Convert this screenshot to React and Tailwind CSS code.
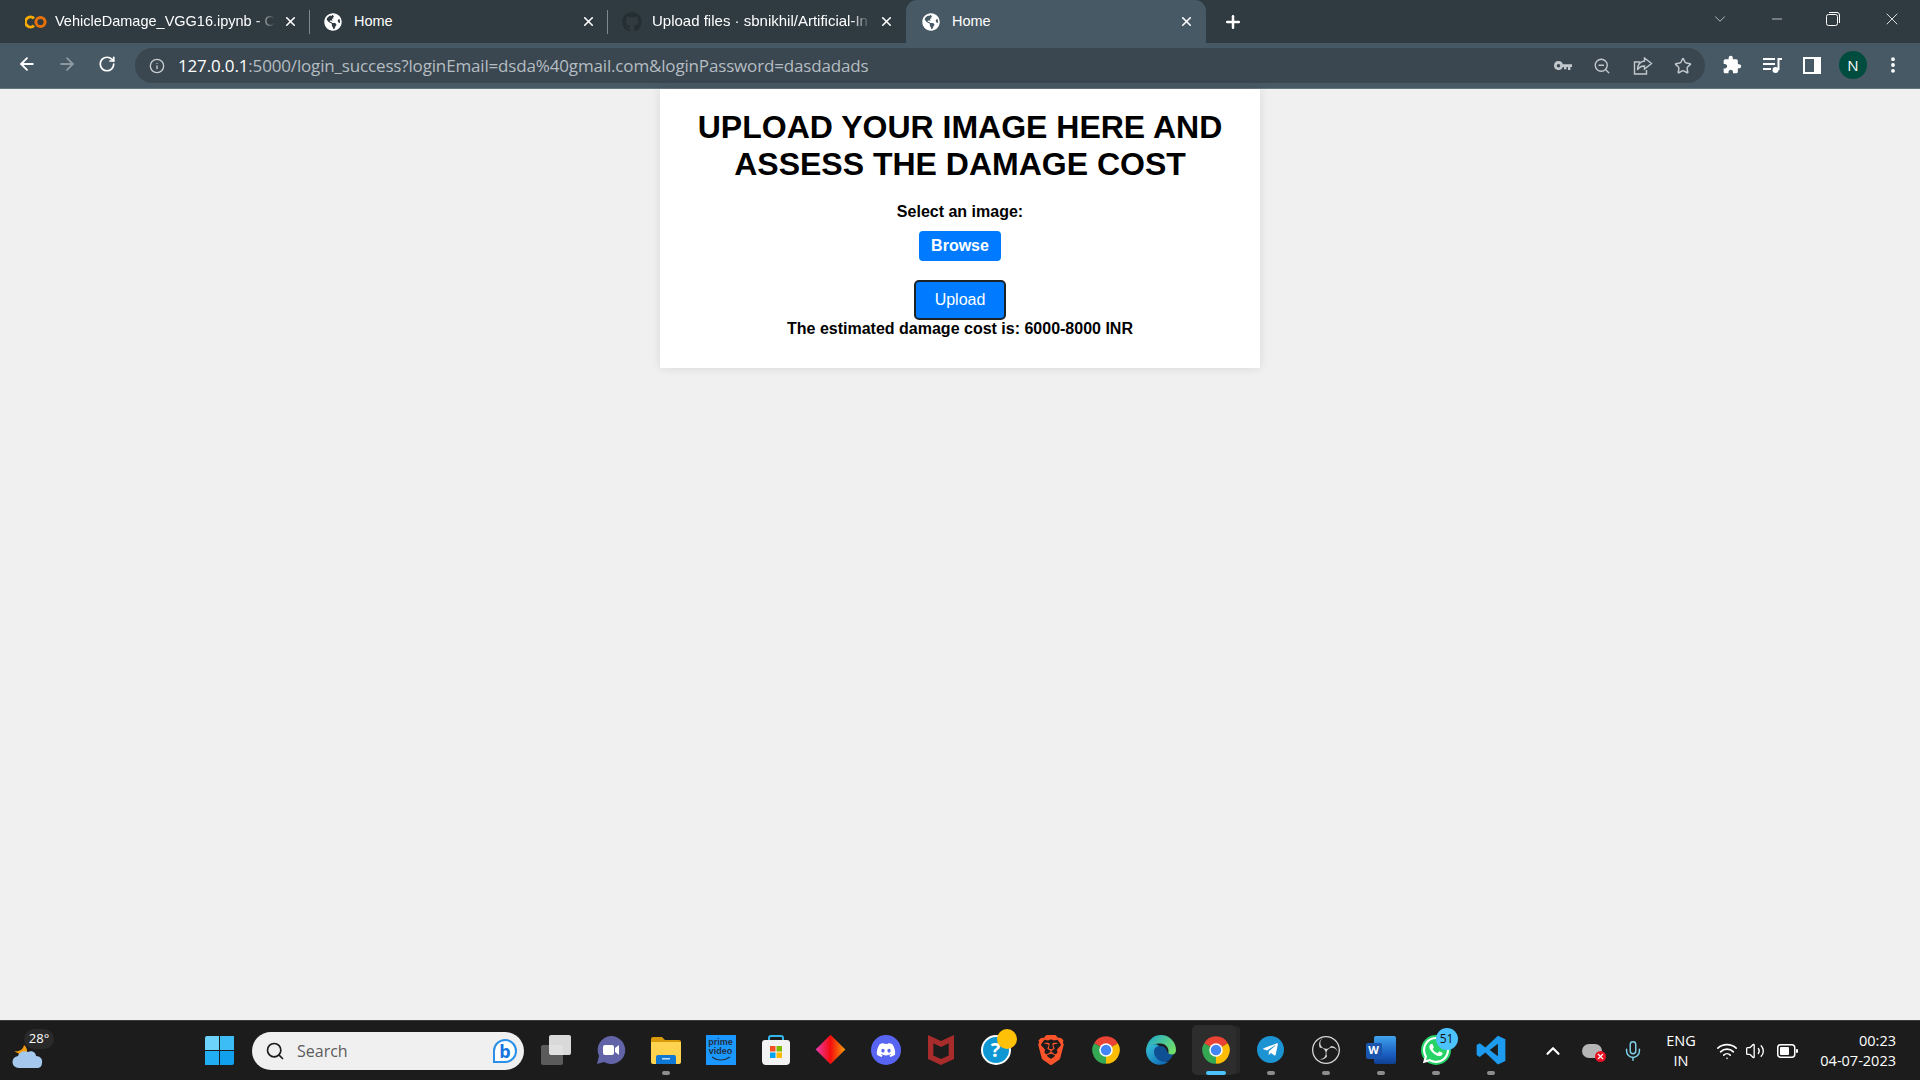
import React from "react";
import { FaGithub, FaGlobeAmericas, FaDiscord, FaWhatsapp, FaTelegramPlane } from "react-icons/fa";
import { SiObsstudio, SiBrave, SiMcafee } from "react-icons/si";
import { ArrowLeft, ArrowRight, RotateCw, Info, ZoomOut, Star, X, Plus, ChevronDown, ChevronUp, Minus, Mic, Wifi, Search, EllipsisVertical, Volume2 } from "lucide-react";

const UI = { fontFamily: '"Open Sans","Noto Sans",sans-serif' };
const TabFont = { fontFamily: '"Liberation Sans",sans-serif' };

function Colab() {
  return (
    <svg width="22" height="14" viewBox="0 0 22 14" fill="none">
      <path d="M9 3.4A5 5 0 1 0 9 10.6" stroke="#f9ab00" strokeWidth="3" />
      <circle cx="15.5" cy="7" r="4.6" stroke="#e8710a" strokeWidth="3" />
    </svg>
  );
}

function Tab({ icon, title, active, fade, sep, first, wide }) {
  if (active) {
    return (
      <div className="flex h-[43px] w-[300px] shrink-0 items-center rounded-t-[11px] bg-[#475964] pl-[16px] pr-[12px]">
        <div className="flex w-[30px] shrink-0">{icon}</div>
        <span className="flex-1 text-[14.5px] text-white" style={TabFont}>{title}</span>
        <X size={15} strokeWidth={2.6} className="text-white" />
      </div>
    );
  }
  return (
    <div className={`relative flex h-[43px] w-[298px] shrink-0 items-center pr-[12px] ${first ? "pl-[13px]" : "pl-[14px]"}`}>
      <div className="flex w-[30px] shrink-0">{icon}</div>
      <span
        className={`flex-1 overflow-hidden whitespace-nowrap text-white ${wide ? "text-[15px]" : "text-[14.5px]"} ${fade ? "[mask-image:linear-gradient(to_right,#000_91%,transparent)]" : ""}`}
        style={TabFont}
      >
        {title}
      </span>
      <X size={15} strokeWidth={2.6} className="ml-[8px] shrink-0 text-white" />
      {sep && <div className="absolute right-0 top-[10px] h-[24px] w-px bg-[#7d8a92]" />}
    </div>
  );
}

function TabStrip() {
  return (
    <div className="flex h-[43px] items-start bg-[#2f3a41] pl-[12px]" style={UI}>
      <Tab first icon={<Colab />} title="VehicleDamage_VGG16.ipynb - C" fade sep />
      <Tab icon={<FaGlobeAmericas size={18} className="text-white" />} title="Home" sep />
      <Tab wide icon={<FaGithub size={20} className="text-[#252e33]" />} title="Upload files · sbnikhil/Artificial-In" fade />
      <Tab active icon={<FaGlobeAmericas size={18} className="text-white" />} title="Home" />
      <Plus size={20} strokeWidth={3} className="ml-[17px] mt-[12px] text-white" />
      <div className="ml-auto flex h-[37px] items-center">
        <ChevronDown size={18} strokeWidth={1} className="mr-[40px] text-[#e3e6e8]" />
        <Minus size={16} strokeWidth={1} className="mr-[41px] text-white" />
        <svg width="14" height="14" viewBox="0 0 14 14" fill="none" className="mr-[42px]" stroke="#fff" strokeWidth="1">
          <rect x="0.5" y="2.5" width="11" height="11" rx="2" />
          <path d="M3 0.5h8a2.5 2.5 0 0 1 2.500 2.500v8" />
        </svg>
        <X size={20} strokeWidth={1} className="mr-[18px] text-white" />
      </div>
    </div>
  );
}

function Toolbar() {
  return (
    <div className="flex h-[46px] items-start border-b border-[#66767f] bg-[#475964] pt-[5px]" style={UI}>
      <div className="flex w-[135px] shrink-0 items-center pl-[17px] pt-[6px]">
        <ArrowLeft size={20} strokeWidth={2.2} className="text-white" />
        <ArrowRight size={20} strokeWidth={2.2} className="ml-[20px] text-[#8d99a1]" />
        <RotateCw size={18} strokeWidth={2.3} className="ml-[21px] text-white" />
      </div>
      <div className="flex h-[35px] w-[1570px] shrink-0 items-center rounded-full bg-[#3a4750] pl-[14px]">
        <Info size={16} strokeWidth={2} className="text-[#c8ced2]" />
        <div className="ml-[13px] whitespace-nowrap text-[17px] leading-none tracking-[-0.16px]">
          <span className="text-white">127.0.0.1</span>
          <span className="text-[#b5bdc2]">:5000/login_success?loginEmail=dsda%40gmail.com&amp;loginPassword=dasdadads</span>
        </div>
        <div className="ml-auto flex items-center text-[#c2c8cc]">
          <svg width="18" height="10" viewBox="0 0 18 10" className="mr-[21px]" fill="currentColor">
            <path d="M4.500 0a4.500 4.500 0 0 1 4.300 3.200H18V6h-1.600v3h-2.400V6h-1.500v2.200H10V6H8.800A4.500 4.500 0 1 1 4.500 0zm0 3a1.800 1.800 0 1 0 0 3.600 1.800 1.800 0 0 0 0-3.600z" />
          </svg>
          <ZoomOut size={18} strokeWidth={1.8} className="mr-[22px]" />
          <svg width="20" height="18" viewBox="0 0 20 18" fill="none" stroke="currentColor" strokeWidth="1.400" className="mr-[21px]">
            <path d="M7 5H1.500v12h12v-4" />
            <path d="M11.500 1l7 5.500-7 5.500V9C8 9 5.800 10.300 4.500 13c0-5 2.500-8.500 7-9z" />
          </svg>
          <Star size={18} strokeWidth={2} className="mr-[13px]" />
        </div>
      </div>
      <div className="flex flex-1 items-center pl-[17px] pt-[3px] text-white">
        <svg width="20" height="20" viewBox="0 0 24 24" fill="#fff">
          <path d="M20.500 11H19V7c0-1.100-.9-2-2-2h-4V3.500C13 2.120 11.880 1 10.500 1S8 2.120 8 3.500V5H4c-1.100 0-1.990.9-1.990 2v3.800H3.500c1.490 0 2.700 1.210 2.700 2.700s-1.210 2.700-2.700 2.700H2V20c0 1.100.9 2 2 2h3.800v-1.500c0-1.490 1.210-2.700 2.700-2.700 1.490 0 2.700 1.210 2.700 2.700V22H17c1.100 0 2-.9 2-2v-4h1.500c1.380 0 2.500-1.120 2.500-2.500S21.880 11 20.500 11z" />
        </svg>
        <svg width="20" height="18" viewBox="0 0 20 18" className="ml-[21px]" fill="#fff">
          <rect x="0" y="2" width="12" height="2" /><rect x="0" y="7" width="12" height="2" /><rect x="0" y="12" width="8" height="2" />
          <circle cx="12.500" cy="14" r="3" /><path d="M14.500 14V2H19v2h-2.500v10z" />
        </svg>
        <div className="ml-[20px] flex h-[17px] w-[18px] border-2 border-white bg-white">
          <div className="h-full w-[9px] bg-[#475964]" />
        </div>
        <div className="ml-[18px] flex h-[28px] w-[28px] items-center justify-center rounded-full bg-[#004d40] text-[15px] text-white">N</div>
        <EllipsisVertical size={20} strokeWidth={2.6} className="ml-[16px]" />
      </div>
    </div>
  );
}

function Card() {
  return (
    <div className="mx-auto flex h-[279px] w-[600px] flex-col items-center bg-white pt-[20px] shadow-[0_0_10px_rgba(0,0,0,0.1)]" style={{ fontFamily: '"Liberation Sans",Arial,sans-serif' }}>
      <h1 className="w-[560px] text-center text-[32px] font-bold leading-[37px] text-black">UPLOAD YOUR IMAGE HERE AND ASSESS THE DAMAGE COST</h1>
      <div className="mt-[20px] text-[16px] font-bold leading-[18px] text-black">Select an image:</div>
      <div className="mt-[10px] flex h-[30px] w-[82px] items-center justify-center rounded-[4px] bg-[#007bff] text-[16px] font-bold text-white">Browse</div>
      <div className="mt-[19px] flex h-[40px] w-[92px] items-center justify-center rounded-[5px] border-2 border-[#1d2226] bg-[#007bff] text-[16px] text-white">Upload</div>
      <div className="text-[16px] font-bold leading-[18px] text-black">The estimated damage cost is: 6000-8000 INR</div>
    </div>
  );
}

function Chrome() {
  return (
    <svg width="30" height="30" viewBox="0 0 24 24">
      <path d="M12 12L2.470 6.500A11 11 0 0 1 21.530 6.500z" fill="#ea4335" />
      <path d="M12 12L21.530 6.500A11 11 0 0 1 12 23z" fill="#fbbc04" />
      <path d="M12 12L12 23A11 11 0 0 1 2.470 6.500z" fill="#34a853" />
      <circle cx="12" cy="12" r="5.400" fill="#fff" />
      <circle cx="12" cy="12" r="4.200" fill="#4285f4" />
    </svg>
  );
}

function Edge() {
  return (
    <svg width="30" height="30" viewBox="0 0 30 30">
      <defs>
        <linearGradient id="edgeA" x1="0" y1="0" x2="1" y2="1"><stop offset="0" stopColor="#36c3d8" /><stop offset="1" stopColor="#0b62b5" /></linearGradient>
        <linearGradient id="edgeB" x1="0" y1="0" x2="1" y2="0.600"><stop offset="0" stopColor="#1ba7d8" /><stop offset="1" stopColor="#6fdc6b" /></linearGradient>
      </defs>
      <path d="M15 0A15 15 0 0 1 30 15C30 20 25 21 22 19 24 15 21 8.500 14 8.500 8 8.500 3 11 0 15 1 6 7 0 15 0z" fill="url(#edgeB)" />
      <path d="M0 15C2 9 14 6 14 14 10 18 13 25 22 27 18 30 14 30 11 29.500 4 28 0 22 0 15z" fill="url(#edgeA)" />
      <path d="M8 17c0-4 3-6 6-6 4 0 6 2 7 5 1 3 4 4 6 3-1 4-4 7-7 8-7 0-12-5-12-10z" fill="#0f4f93" />
    </svg>
  );
}

function Slot({ children, dot, active }) {
  return (
    <div className="relative flex h-[50px] w-[55px] shrink-0 items-center justify-center">
      {active && <div className="absolute left-[4px] top-0 h-[50px] w-[44px] rounded-[5px] bg-[#2d2d2d] shadow-[5px_0_0_-1px_#282828]" />}
      <div className="relative flex items-center justify-center">{children}</div>
      {dot && <div className="absolute bottom-0 h-[4px] w-[8px] rounded-full bg-[#8d8d8d]" />}
      {active && <div className="absolute bottom-0 h-[4px] w-[20px] rounded-full bg-[#4cc2ff]" />}
    </div>
  );
}

function Taskbar() {
  return (
    <div className="flex h-[60px] items-center border-t border-[#3a3a3a] bg-[#1c1c1c] text-white" style={UI}>
      <div className="relative flex h-full w-[205px] shrink-0 items-center pl-[12px]">
        <svg width="32" height="30" viewBox="0 0 32 30" className="mt-[6px]">
          <path d="M2 12c5 1 9-1 10-6 4 3 4 9 1 12z" fill="#f59e0b" />
          <path d="M7 29a6 6 0 0 1-1-12c1-4 6-6 10-4 3-2 8 0 8 4 4 0 7 3 6 7 0 3-2 5-5 5z" fill="#a5c8ef" />
        </svg>
        <div className="absolute left-[24px] top-[8px] flex h-[20px] w-[30px] items-center justify-center rounded-full bg-[#2a2a2a] text-[13px]">28°</div>
      </div>
      <div className="grid h-[29px] w-[29px] shrink-0 grid-cols-2 gap-px">
        <div className="rounded-tl-[2px] bg-[#6ed3fb]" />
        <div className="bg-[#3dbdf6]" />
        <div className="bg-[#22aef2]" />
        <div className="rounded-br-[2px] bg-[#10a0ee]" />
      </div>
      <div className="ml-[18px] flex h-[38px] w-[272px] shrink-0 items-center rounded-full bg-[#f0f0f0] pl-[13px] pr-[7px]">
        <Search size={20} strokeWidth={2} className="text-[#1c1c1c]" />
        <span className="ml-[12px] text-[16px] text-[#5c5c5c]">Search</span>
        <div className="relative ml-auto flex h-[24px] w-[24px] items-center justify-center rounded-full rounded-bl-[2px] border-2 border-[#2a8fe8] bg-white text-[18px] font-bold leading-none text-[#1673e0]">b</div>
      </div>
      <div className="mb-[2px] ml-[4px] flex shrink-0 items-center">
        <Slot>
          <div className="relative h-[30px] w-[30px]">
            <div className="absolute bottom-0 left-0 h-[20px] w-[22px] rounded-[2px] bg-[#5b5b5b]" />
            <div className="absolute right-0 top-0 h-[20px] w-[22px] rounded-[2px] bg-[#eeeeee]/90" />
          </div>
        </Slot>
        <Slot>
          <svg width="30" height="30" viewBox="0 0 30 30">
            <path d="M15 1a14 14 0 1 1-7 26l-7 2 2-8A14 14 0 0 1 15 1z" fill="#6264a7" />
            <rect x="7" y="10" width="11" height="10" rx="2" fill="#fff" />
            <path d="M19 13l4-3v10l-4-3z" fill="#fff" />
          </svg>
        </Slot>
        <Slot dot>
          <svg width="30" height="30" viewBox="0 0 30 30">
            <path d="M0 4a2 2 0 0 1 2-2h9l3 3h14a2 2 0 0 1 2 2v5H0z" fill="#d99a0c" />
            <path d="M0 7h30v20a2 2 0 0 1-2 2H2a2 2 0 0 1-2-2z" fill="#ffd24f" />
            <path d="M5 22a2 2 0 0 1 2-2h16a2 2 0 0 1 2 2v7H5z" fill="#0f78d4" />
            <rect x="11" y="23" width="8" height="1.500" fill="#bfe0ff" />
          </svg>
        </Slot>
        <Slot>
          <div className="flex h-[30px] w-[30px] flex-col items-center justify-center bg-[#1a98ff] text-[#232f3e]" style={TabFont}>
            <span className="text-[9px] font-bold leading-[9px]">prime</span>
            <span className="text-[9px] font-bold leading-[9px]">video</span>
            <svg width="20" height="6" viewBox="0 0 20 6" fill="none" stroke="#232f3e" strokeWidth="1.200"><path d="M1 1c5 4 12 4 18 0" /></svg>
          </div>
        </Slot>
        <Slot>
          <svg width="30" height="30" viewBox="0 0 30 30">
            <path d="M8 6V3a2 2 0 0 1 2-2h10a2 2 0 0 1 2 2v3" fill="none" stroke="#2fb7ee" strokeWidth="2" />
            <path d="M1 8a3 3 0 0 1 3-3h22a3 3 0 0 1 3 3v18a4 4 0 0 1-4 4H5a4 4 0 0 1-4-4z" fill="#f3f3f3" />
            <rect x="9" y="11" width="5.500" height="5.500" fill="#f25022" />
            <rect x="15.500" y="11" width="5.500" height="5.500" fill="#7fba00" />
            <rect x="9" y="17.500" width="5.500" height="5.500" fill="#00a4ef" />
            <rect x="15.500" y="17.500" width="5.500" height="5.500" fill="#ffb900" />
          </svg>
        </Slot>
        <Slot>
          <div className="h-[21px] w-[21px] rotate-45 bg-[linear-gradient(to_top_right,#e83bb0,#f50d0d_50%,#f59e0b)]" />
        </Slot>
        <Slot>
          <div className="flex h-[30px] w-[30px] items-center justify-center rounded-full bg-[#5865f2]">
            <FaDiscord size={20} className="text-white" />
          </div>
        </Slot>
        <Slot>
          <SiMcafee size={30} className="text-[#a82c2c]" />
        </Slot>
        <Slot>
          <div className="flex h-[30px] w-[30px] items-center justify-center rounded-full border-2 border-white bg-[#0f97d3] text-[20px] font-bold leading-none text-white">?</div>
          <div className="absolute -right-[6px] -top-[6px] h-[20px] w-[20px] rounded-full bg-[#ffc107]" />
        </Slot>
        <Slot>
          <SiBrave size={30} className="text-[#fb542b]" />
        </Slot>
        <Slot><Chrome /></Slot>
        <Slot><Edge /></Slot>
        <Slot active><Chrome /></Slot>
        <Slot dot>
          <div className="flex h-[27px] w-[27px] items-center justify-center rounded-full bg-[#1c93d2]">
            <FaTelegramPlane size={17} className="text-white" />
          </div>
        </Slot>
        <Slot dot>
          <SiObsstudio size={28} className="text-[#d8d8d8]" />
        </Slot>
        <Slot dot>
          <div className="relative h-[28px] w-[30px]">
            <div className="absolute right-0 top-0 h-[28px] w-[22px] rounded-[2px] bg-[linear-gradient(to_bottom,#41a5ee,#2b7cd3_35%,#185abd_70%,#103f91)]" />
            <div className="absolute left-0 top-[7px] flex h-[16px] w-[16px] items-center justify-center rounded-[2px] bg-[#1a56ad] text-[11px] font-bold text-white">W</div>
          </div>
        </Slot>
        <Slot dot>
          <div className="flex h-[30px] w-[30px] items-center justify-center rounded-full bg-[#25d366]">
            <FaWhatsapp size={30} className="text-white" />
          </div>
          <div className="absolute -right-[7px] -top-[7px] flex h-[22px] w-[22px] items-center justify-center rounded-full bg-[#4cc2ff] text-[12px] text-[#111]">51</div>
        </Slot>
        <Slot dot>
          <svg width="30" height="30" viewBox="0 0 24 24">
            <path d="M17.500 0.500L23.500 3.300V20.700L17.500 23.500 7.500 14 3 17.500 0.500 16V8L3 6.500 7.500 10zM17.500 7L11 12l6.500 5z" fill="#1d9bef" fillRule="evenodd" />
          </svg>
        </Slot>
      </div>
      <div className="ml-auto flex h-full shrink-0 items-center pr-[24px]">
        <ChevronUp size={22} strokeWidth={2.4} className="text-white" />
        <div className="relative ml-[18px] h-[14px] w-[20px] rounded-full bg-[#b5b5b5]">
          <div className="absolute -bottom-[4px] -right-[4px] flex h-[11px] w-[11px] items-center justify-center rounded-full bg-[#e81123]">
            <X size={9} strokeWidth={3} className="text-white" />
          </div>
        </div>
        <Mic size={22} strokeWidth={1.6} className="ml-[20px] text-[#7fd0e6]" />
        <div className="ml-[19px] flex w-[36px] flex-col items-center text-[14.5px] leading-[20px] text-white">
          <span>ENG</span>
          <span>IN</span>
        </div>
        <Wifi size={22} strokeWidth={1.8} className="ml-[17px] text-white" />
        <Volume2 size={20} strokeWidth={1.6} className="ml-[7px] text-white" />
        <svg width="21" height="14" viewBox="0 0 21 14" fill="none" className="ml-[12px]">
          <rect x="0.750" y="0.750" width="17" height="12.500" rx="3" stroke="#fff" strokeWidth="1.500" />
          <rect x="3" y="3" width="9" height="8" rx="1" fill="#fff" />
          <rect x="19" y="5" width="2" height="4" rx="1" fill="#fff" />
        </svg>
        <div className="ml-[20px] flex w-[78px] flex-col items-end whitespace-nowrap text-[14.5px] leading-[20px] text-white">
          <span>00:23</span>
          <span>04-07-2023</span>
        </div>
      </div>
    </div>
  );
}

export default function App() {
  return (
    <div className="flex h-screen w-full flex-col overflow-hidden bg-[#f0f0f0]">
      <TabStrip />
      <Toolbar />
      <main className="min-h-0 flex-1">
        <Card />
      </main>
      <Taskbar />
    </div>
  );
}
